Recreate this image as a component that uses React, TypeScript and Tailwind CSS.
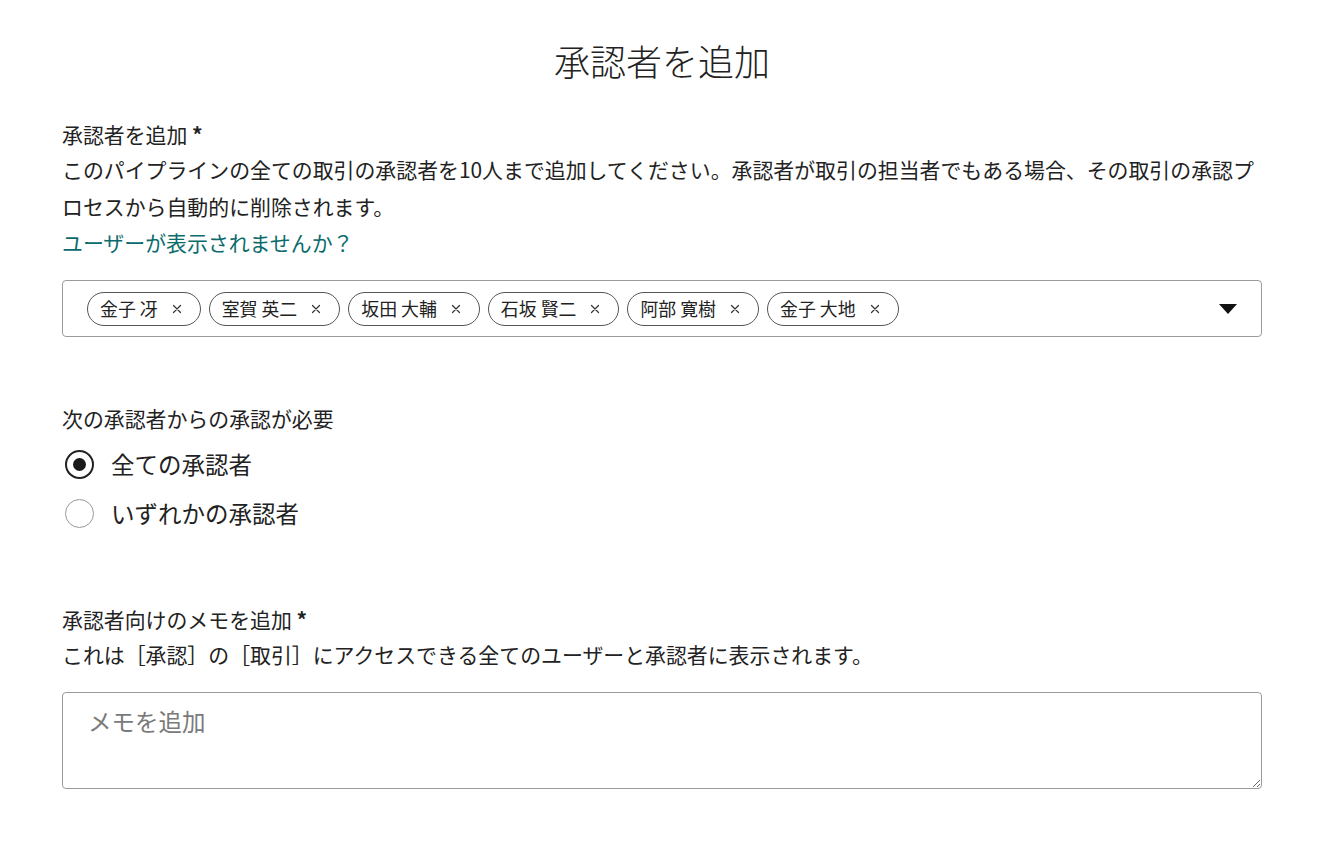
import { useState } from "react"

const approvers = ["金子 冴", "室賀 英二", "坂田 大輔", "石坂 賢二", "阿部 寛樹", "金子 大地"]

const font = { fontFamily: "'Noto Sans CJK JP', 'Noto Sans', sans-serif" }

function Chip({ name, onRemove }: { name: string; onRemove: () => void }) {
  return (
    <span className="flex h-[34px] items-center rounded-full border border-[#555] pl-[12px] pr-[18px] text-[17.9px] leading-none text-[#222]">
      <span className="whitespace-pre">{name}</span>
      <button type="button" onClick={onRemove} className="ml-[14px] flex h-[10px] w-[10px] items-center justify-center">
        <svg viewBox="0 0 10 10" className="h-[10px] w-[10px]" stroke="#333" strokeWidth={1.2} strokeLinecap="round">
          <path d="M1.5 1.5l7 7M8.5 1.5l-7 7" />
        </svg>
      </button>
    </span>
  )
}

function Radio({ checked, label, onSelect }: { checked: boolean; label: string; onSelect: () => void }) {
  return (
    <label onClick={onSelect} className="flex h-[49px] cursor-pointer items-center">
      <span
        className={
          checked
            ? "ml-[3px] flex h-[29px] w-[29px] items-center justify-center rounded-full border-2 border-[#222]"
            : "ml-[3px] flex h-[29px] w-[29px] items-center justify-center rounded-full border-[1.5px] border-[#999]"
        }
      >
        {checked && <span className="h-[13px] w-[13px] rounded-full bg-[#1a1a1a]" />}
      </span>
      <span className="ml-[17px] text-[23.5px] leading-none text-[#222]">{label}</span>
    </label>
  )
}

export default function App() {
  const [names, setNames] = useState(approvers)
  const [mode, setMode] = useState<"all" | "any">("all")

  return (
    <main className="min-h-[862px] w-[1336px] bg-white pl-[62px]" style={font}>
      <div className="w-[1200px] pt-[38px] text-[#222]">
        <h1 className="text-center text-[36px] font-light leading-[44px]">承認者を追加</h1>

        <section className="mt-[36px]">
          <p className="text-[20.9px] leading-[33px]">
            承認者を追加 <span className="font-bold">*</span>
          </p>
          <p className="text-[20.9px] leading-[37px]">
            このパイプラインの全ての取引の承認者を10人まで追加してください。承認者が取引の担当者でもある場合、その取引の承認プロセスから自動的に削除されます。
          </p>
          <a href="#" className="block text-[20.9px] leading-[34px] text-[#0b6b6b]">
            ユーザーが表示されませんか？
          </a>

          <div className="mt-[21px] flex h-[57px] items-center rounded-[4px] border border-[#9b9b9b] pl-[24px] pr-[24px]">
            <div className="flex flex-1 gap-[8px]">
              {names.map((n) => (
                <Chip key={n} name={n} onRemove={() => setNames(names.filter((x) => x !== n))} />
              ))}
            </div>
            <svg viewBox="0 0 18 10" className="h-[10px] w-[18px]">
              <path d="M0 0h18L9 10z" fill="#111" />
            </svg>
          </div>
        </section>

        <section className="mt-[63px]">
          <p className="text-[20.9px] leading-[36px]">次の承認者からの承認が必要</p>
          <div className="mt-[4px]">
            <Radio checked={mode === "all"} label="全ての承認者" onSelect={() => setMode("all")} />
            <Radio checked={mode === "any"} label="いずれかの承認者" onSelect={() => setMode("any")} />
          </div>
        </section>

        <section className="mt-[64px]">
          <p className="text-[20.9px] leading-[34px]">
            承認者向けのメモを追加 <span className="font-bold">*</span>
          </p>
          <p className="text-[20.9px] leading-[36px]">
            これは［承認］の［取引］にアクセスできる全てのユーザーと承認者に表示されます。
          </p>
          <textarea
            placeholder="メモを追加"
            className="mt-[20px] block h-[97px] w-full resize-y rounded-[4px] border border-[#9b9b9b] px-[25px] pt-[12px] text-[23.5px] leading-[32px] text-[#222] outline-none placeholder:text-[#7a7a7a]"
            style={font}
          />
        </section>
      </div>
    </main>
  )
}
